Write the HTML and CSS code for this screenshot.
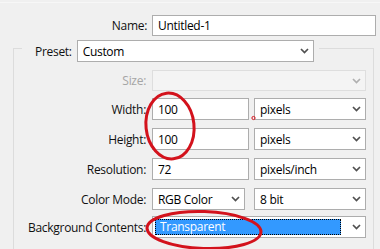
FILE: index.html
```html
<!DOCTYPE html>
<html lang="en">
<head>
    <meta charset="UTF-8">
    <meta name="viewport" content="width=device-width, initial-scale=1.0">
    <link rel="stylesheet" href="styles.css">
    <title>New</title>
</head>
<body>
    <div class="dialog">
        <div class="row row-name">
            <label class="lbl lbl-name" for="name">Name:</label>
            <input class="field field-name" type="text" id="name" value="Untitled-1">
        </div>

        <fieldset class="group">
            <legend class="group-legend">
                <span class="lbl-preset">Preset:</span>
                <div class="select select-preset"><span>Custom</span><svg class="chev" viewBox="0 0 9 6"><path d="M1 1L4.5 4.5L8 1"/></svg></div>
            </legend>

            <div class="row row-size">
                <span class="lbl lbl-off">Size:</span>
                <div class="select select-off select-wide"><span></span><svg class="chev" viewBox="0 0 9 6"><path d="M1 1L4.5 4.5L8 1"/></svg></div>
            </div>

            <div class="row">
                <label class="lbl" for="width">Width:</label>
                <input class="field field-num" type="text" id="width" value="100">
                <div class="select select-unit"><span>pixels</span><svg class="chev" viewBox="0 0 9 6"><path d="M1 1L4.5 4.5L8 1"/></svg></div>
            </div>

            <div class="row">
                <label class="lbl" for="height">Height:</label>
                <input class="field field-num" type="text" id="height" value="100">
                <div class="select select-unit"><span>pixels</span><svg class="chev" viewBox="0 0 9 6"><path d="M1 1L4.5 4.5L8 1"/></svg></div>
            </div>

            <div class="row">
                <label class="lbl" for="res">Resolution:</label>
                <input class="field field-num" type="text" id="res" value="72">
                <div class="select select-unit"><span>pixels/inch</span><svg class="chev" viewBox="0 0 9 6"><path d="M1 1L4.5 4.5L8 1"/></svg></div>
            </div>

            <div class="row">
                <span class="lbl">Color Mode:</span>
                <div class="select select-mode"><span>RGB Color</span><svg class="chev" viewBox="0 0 9 6"><path d="M1 1L4.5 4.5L8 1"/></svg></div>
                <div class="select select-unit"><span>8 bit</span><svg class="chev" viewBox="0 0 9 6"><path d="M1 1L4.5 4.5L8 1"/></svg></div>
            </div>

            <div class="row row-bg">
                <span class="lbl">Background Contents:</span>
                <div class="select select-wide select-hl"><span class="hl">Transparent</span><svg class="chev" viewBox="0 0 9 6"><path d="M1 1L4.5 4.5L8 1"/></svg></div>
            </div>
        </fieldset>

        <!-- red annotation marks drawn over the dialog -->
        <svg class="marks" width="380" height="249" viewBox="0 0 380 249">
            <ellipse cx="170" cy="124" rx="24" ry="33" transform="rotate(-6 170 124)"/>
            <ellipse cx="204" cy="228" rx="57" ry="18.5" transform="rotate(2 204 228)"/>
            <circle class="dot" cx="253.5" cy="116" r="1.6"/>
        </svg>
    </div>
</body>
</html>
```

FILE: styles.css
```css
*{
    box-sizing: border-box;
}
body{
    margin: 0;
    background-color: #f0f0f0;
    font-family: "Open Sans", "Liberation Sans", sans-serif;
    font-size: 12px;
    letter-spacing: -0.3px;
    color: #111;
}
.dialog{
    position: relative;
    width: 380px;
    height: 249px;
    overflow: hidden;
    padding-top: 12px;
    border-top: 2px solid #f0f0f0;
}
.dialog::before{
    content: "";
    position: absolute;
    left: 0;
    right: 0;
    top: 0;
    border-top: 1px solid #f7f7f7;
}

.row{
    display: flex;
    align-items: center;
    gap: 5px;
    height: 22px;
    margin-top: 8px;
}
.lbl{
    width: 133px;
    text-align: right;
    padding-right: 1px;
    white-space: nowrap;
}
.lbl-off{
    color: #a5a5a5;
}

.row-name{
    margin-top: 0;
    margin-right: 4px;
    gap: 4px;
}
.lbl-name{
    width: 148px;
}

.field{
    height: 22px;
    margin: 0;
    padding: 0 5px;
    border: 1px solid #adadad;
    background: #fff;
    font: inherit;
    letter-spacing: inherit;
    color: #000;
    outline: none;
}
.field-name{
    flex: 1;
    height: 21px;
}
.field-num{
    width: 97px;
}

.group{
    margin: -2px 6px 0 13px;
    padding: 0 7px 0 0;
    border: 1px solid #dcdcdc;
    border-bottom: none;
    height: 240px;
}
.group-legend{
    display: flex;
    align-items: center;
    margin-left: 8px;
    padding: 6px 5px 0 13px;
}
.lbl-preset{
    margin-right: 5px;
}

.select{
    display: flex;
    align-items: center;
    justify-content: space-between;
    height: 22px;
    padding: 0 4px 0 5px;
    border: 1px solid #adadad;
    background: #fff;
    color: #000;
}
.chev{
    width: 9px;
    height: 6px;
    fill: none;
    stroke: #505050;
    stroke-width: 1.7;
}
.select-preset{
    width: 237px;
}
.select-wide{
    width: 214px;
}
.select-unit{
    width: 112px;
}
.select-mode{
    width: 93px;
    margin-right: 4px;
}
.select-off{
    background: #f4f4f4;
    border-color: #dedede;
}
.select-off .chev{
    stroke: #b0b0b0;
}
.row-size{
    margin-top: 8px;
    height: 21px;
}
.row-size .select{
    height: 21px;
}
.row-size + .row{
    margin-top: 7px;
}
.row-bg{
    margin-top: 6px;
}

.select-hl{
    padding-left: 2px;
}
.hl{
    flex: 1;
    margin-right: 11px;
    height: 16px;
    line-height: 14px;
    padding-left: 4px;
    background: #3399ff;
    color: #fff;
    border: 1px dotted #000;
}

.marks{
    position: absolute;
    left: 0;
    top: 0;
    pointer-events: none;
}
.marks ellipse{
    fill: none;
    stroke: #d3121c;
    stroke-width: 3;
}
.marks .dot{
    fill: none;
    stroke: #d3121c;
    stroke-width: 1;
}
```
